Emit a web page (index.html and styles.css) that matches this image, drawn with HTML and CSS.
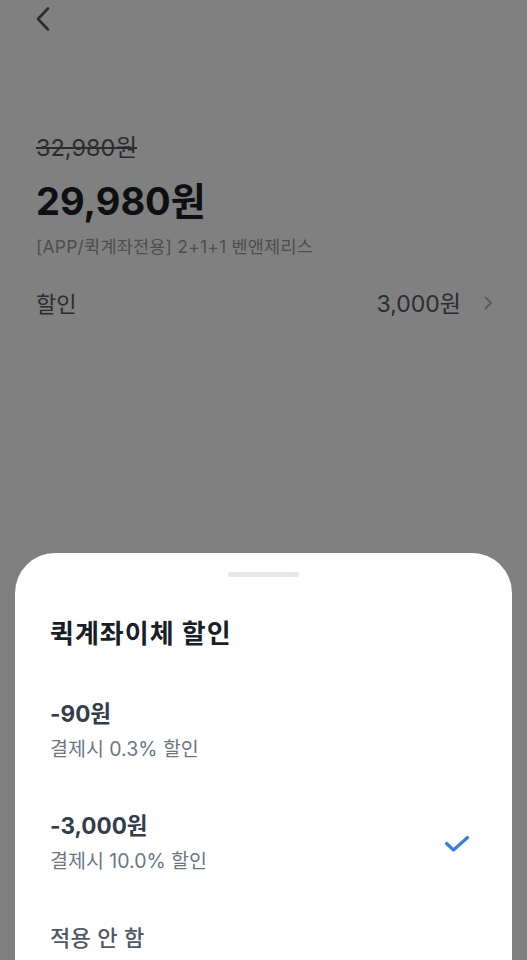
FILE: index.html
```html
<!DOCTYPE html>
<html lang="ko">
<head>
<meta charset="utf-8">
<title>퀵계좌이체 할인</title>
<link rel="stylesheet" href="styles.css">
</head>
<body>
<div class="page">
  <header class="topbar">
    <svg class="back" width="16" height="26" viewBox="0 0 16 26" fill="none">
      <path d="M13 2.5 L3 13 L13 23.5" stroke="#2a2c30" stroke-width="2.6" stroke-linecap="round" stroke-linejoin="round"/>
    </svg>
  </header>
  <section class="price">
    <div class="orig">32,980원</div>
    <div class="final">29,980원</div>
    <div class="name">[APP/퀵계좌전용] 2+1+1 벤앤제리스</div>
    <div class="disc-row">
      <span class="disc-label">할인</span>
      <span class="disc-val">3,000원
        <svg class="chev" width="10" height="14" viewBox="0 0 10 14" fill="none">
          <path d="M2.5 1.5 L8 7 L2.5 12.5" stroke="#555a60" stroke-width="1.8" stroke-linecap="round" stroke-linejoin="round"/>
        </svg>
      </span>
    </div>
  </section>
</div>

<div class="sheet">
  <div class="handle"></div>
  <h2 class="sheet-title">퀵계좌이체 할인</h2>
  <div class="option">
    <div class="opt-text">
      <div class="opt-label">-90원</div>
      <div class="opt-sub">결제시 0.3% 할인</div>
    </div>
  </div>
  <div class="option">
    <div class="opt-text">
      <div class="opt-label">-3,000원</div>
      <div class="opt-sub">결제시 10.0% 할인</div>
    </div>
    <svg class="check" width="26" height="18" viewBox="0 0 26 18" fill="none">
      <path d="M2.5 8.5 L9.5 15 L23.5 2.5" stroke="#3a7fdc" stroke-width="3.2" stroke-linecap="round" stroke-linejoin="round"/>
    </svg>
  </div>
  <div class="option">
    <div class="opt-none">적용 안 함</div>
  </div>
</div>
</body>
</html>
```
FILE: styles.css
```css
html, body {
  margin: 0;
  padding: 0;
}
body {
  background: #808080;
  width: 527px;
  height: 960px;
  overflow: hidden;
  position: relative;
  font-family: Inter, "Noto Sans CJK KR", sans-serif;
}
.page {
  padding: 0 36px;
}
.topbar {
  height: 40px;
  display: flex;
  align-items: flex-start;
}
.back {
  margin-top: 6px;
  margin-left: -1px;
}
.price {
  padding-top: 93px;
  display: flex;
  flex-direction: column;
}
.orig {
  font-size: 23.5px;
  line-height: 30px;
  color: #2b2c2e;
  text-decoration: line-through;
  text-decoration-thickness: 2px;
}
.final {
  margin-top: 16px;
  font-size: 38px;
  line-height: 44px;
  font-weight: 700;
  color: #0d0f12;
}
.name {
  margin-top: 12px;
  font-size: 17.5px;
  line-height: 24px;
  color: #4c4e51;
  letter-spacing: 0.2px;
}
.disc-row {
  margin-top: 28px;
  display: flex;
  justify-content: space-between;
  align-items: center;
  height: 30px;
  font-size: 22px;
  color: #2a2c30;
}
.disc-val {
  display: flex;
  align-items: center;
  gap: 22px;
  font-size: 23px;
  margin-right: -2px;
}
.chev {
  margin-top: 1px;
}
.sheet {
  position: absolute;
  left: 15px;
  top: 553px;
  width: 497px;
  bottom: -40px;
  background: #ffffff;
  border-radius: 40px 40px 0 0;
  padding: 19px 42px 0 35px;
  box-sizing: border-box;
}
.handle {
  width: 71px;
  height: 5px;
  border-radius: 3px;
  background: #e4e6e9;
  margin: 0 auto;
  position: relative;
  left: 3.5px;
}
.sheet-title {
  margin: 40px 0 0;
  font-size: 26px;
  line-height: 34px;
  font-weight: 700;
  color: #191f28;
  letter-spacing: 1px;
}
.sheet-title + .option {
  margin-top: 24px;
}
.option {
  display: flex;
  justify-content: space-between;
  align-items: center;
  padding: 25px 0;
}
.opt-text {
  display: flex;
  flex-direction: column;
  gap: 8px;
}
.opt-label {
  font-size: 22.5px;
  line-height: 28px;
  font-weight: 700;
  color: #333d4b;
}
.opt-sub {
  font-size: 19.5px;
  line-height: 26px;
  color: #6b7684;
}
.opt-none {
  font-size: 22px;
  line-height: 28px;
  color: #4e5968;
  font-weight: 500;
  letter-spacing: 0.3px;
}
.check {
  margin-top: 2px;
}
```
